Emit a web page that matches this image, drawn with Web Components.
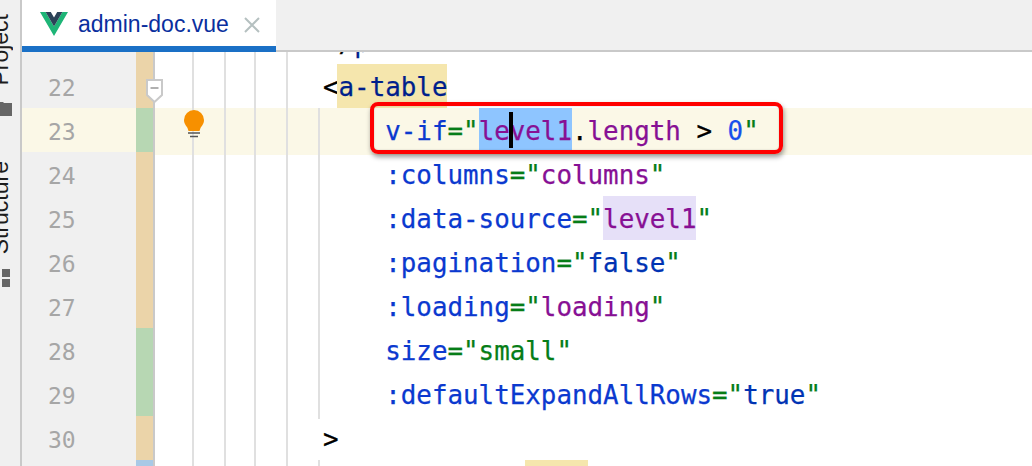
<!DOCTYPE html>
<html><head><meta charset="utf-8"><style>
html,body{margin:0;padding:0;background:#fff;overflow:hidden}
</style></head><body>
<ide-app>
  <tool-rail slot="rail">
    <rail-item label="Project" icon="folder"></rail-item>
    <rail-item label="Structure" icon="structure"></rail-item>
  </tool-rail>
  <editor-tabs slot="tabs"><file-tab>admin-doc.vue</file-tab></editor-tabs>
  <code-view slot="code">
    <code-row change="o" nog5><code-tok k="p">&lt;/</code-tok><code-tok k="tag">p</code-tok><code-tok k="p">&gt;</code-tok></code-row>
    <code-row n="22" change="o" nog5 fold><code-tok k="p">&lt;</code-tok><code-tok k="tag" hl="tagmatch">a-table</code-tok></code-row>
    <code-row n="23" change="g" current bulb>    <code-tok k="attr">v-if</code-tok><code-tok k="str">="</code-tok><code-tok k="var" hl="sel">le<text-caret></text-caret>vel1</code-tok><code-tok k="p">.</code-tok><code-tok k="var">length</code-tok><code-tok k="p"> &gt; </code-tok><code-tok k="num">0</code-tok><code-tok k="str">"</code-tok><red-mark></red-mark></code-row>
    <code-row n="24" change="o">    <code-tok k="attr">:columns</code-tok><code-tok k="str">="</code-tok><code-tok k="var">columns</code-tok><code-tok k="str">"</code-tok></code-row>
    <code-row n="25" change="o">    <code-tok k="attr">:data-source</code-tok><code-tok k="str">="</code-tok><code-tok k="var" hl="read">level1</code-tok><code-tok k="str">"</code-tok></code-row>
    <code-row n="26" change="o">    <code-tok k="attr">:pagination</code-tok><code-tok k="str">="</code-tok><code-tok k="kw">false</code-tok><code-tok k="str">"</code-tok></code-row>
    <code-row n="27" change="o">    <code-tok k="attr">:loading</code-tok><code-tok k="str">="</code-tok><code-tok k="var">loading</code-tok><code-tok k="str">"</code-tok></code-row>
    <code-row n="28" change="g">    <code-tok k="attr">size</code-tok><code-tok k="str">="small"</code-tok></code-row>
    <code-row n="29" change="g">    <code-tok k="attr">:defaultExpandAllRows</code-tok><code-tok k="str">="</code-tok><code-tok k="kw">true</code-tok><code-tok k="str">"</code-tok></code-row>
    <code-row n="30" change="o" nog5><code-tok k="p">&gt;</code-tok></code-row>
    <code-row change="b">             <code-tok k="p" hl="match">    </code-tok></code-row>
  </code-view>
</ide-app>
<script>
function def(name,css,html,init){
  customElements.define(name,class extends HTMLElement{
    constructor(){super();const r=this.attachShadow({mode:'open'});r.innerHTML='<style>'+css+'</style>'+html;}
    connectedCallback(){if(init)init(this,this.shadowRoot);}
  });
}
const MONO='"DejaVu Sans Mono","Liberation Mono",monospace';
def('ide-app',`:host{display:grid;grid-template-columns:22px 1fr;grid-template-rows:52px 1fr;width:1032px;height:466px;overflow:hidden;background:#fff}
.rail{grid-row:1/3;display:block;min-height:0}.tabs{position:relative;z-index:2}.code{min-height:0;overflow:hidden}`,
`<div class="rail"><slot name="rail"></slot></div><div class="tabs"><slot name="tabs"></slot></div><div class="code"><slot name="code"></slot></div>`);
def('tool-rail',`:host{display:flex;flex-direction:column;box-sizing:border-box;width:22px;height:466px;background:#f0f0f0;border-right:2px solid #c9c9c9;overflow:hidden;padding-top:14px;gap:45px}`,`<slot></slot>`);
const ICONS={
 folder:`<svg width="12" height="15" viewBox="0 0 12 15"><path d="M0 1h3l1 1h8v13H0z" fill="#666"/></svg>`,
 structure:`<svg width="12" height="18" viewBox="0 0 12 18"><path d="M2 0h8v8H2zM2 10h8v8H2z" fill="#666"/></svg>`
};
def('rail-item',`:host{display:flex;flex-direction:column;align-items:flex-start;gap:15px;width:20px}
.t{writing-mode:vertical-rl;transform:rotate(180deg);font:23px/25px "Liberation Sans",Arial,sans-serif;color:#1c1c1c;margin-left:-12px;white-space:nowrap}
svg{display:block}`,`<div class="t"></div><div class="i"></div>`,(el,r)=>{
 r.querySelector('.t').textContent=el.getAttribute('label');
 r.querySelector('.i').innerHTML=ICONS[el.getAttribute('icon')];
});
def('editor-tabs',`:host{display:flex;height:52px;box-sizing:border-box;background:#f0f0f0;border-bottom:2px solid #c9c9c9}`,`<slot></slot>`);
def('file-tab',`:host{display:flex;align-items:center;box-sizing:border-box;width:254px;height:52px;background:#fff;border-bottom:6px solid #1a70c6;padding-left:18px;gap:10px;font:23px "Liberation Sans",Arial,sans-serif;color:#0a2f9e}
.n{white-space:nowrap;width:156px;margin-top:2px}svg{display:block;flex:none;margin-top:1px}svg.x{margin-top:4px}`,
`<svg width="28" height="24" viewBox="0 0 28 24"><path d="M0 0h5.6L14 14.4 22.4 0H28L14 24z" fill="#1eb577"/><path d="M5.6 0h5.2L14 5.4 17.2 0h5.2L14 14.4z" fill="#2c4358"/></svg><span class="n"><slot></slot></span><svg class="x" width="16" height="16" viewBox="0 0 16 16"><path d="M1 1l14 14M15 1L1 15" stroke="#b5c0c0" stroke-width="2" fill="none"/></svg>`);
def('code-view',`:host{display:block;margin-top:-32px}`,`<slot></slot>`);
def('code-row',`:host{display:grid;grid-template-columns:114px 17px 2px 1fr;height:44px;--bg:transparent;--gut:#f0f0f0;--g5:#e0e0e0;position:relative}
:host([current]){--bg:#fbf8e7;--gut:#fbf8e7}
:host([nog5]){--g5:transparent}
.num{background:var(--gut);color:#a6a6a6;font:23px/48px ${MONO};padding-left:26px;box-sizing:border-box;height:44px;overflow:hidden}
.chg{background:#ebd4a9}
:host([change=g]) .chg{background:#b7d7b3}
:host([change=b]) .chg{background:#a9c9e6}
.sep{background:#c9c9c9}
.code{position:relative;padding-left:168px;background:
 linear-gradient(#e0e0e0,#e0e0e0) 37px 0/2px 100% no-repeat,
 linear-gradient(#e0e0e0,#e0e0e0) 69px 0/2px 100% no-repeat,
 linear-gradient(#e0e0e0,#e0e0e0) 99px 0/2px 100% no-repeat,
 linear-gradient(#e0e0e0,#e0e0e0) 131px 0/2px 100% no-repeat,
 linear-gradient(var(--g5),var(--g5)) 163px 0/2px 100% no-repeat,
 var(--bg);
 font:25.85px/47px ${MONO};white-space:pre;color:#000;-webkit-text-stroke:.25px}
.fold{position:absolute;left:124px;top:15px;z-index:1}
.bulb{position:absolute;left:162px;top:2px;z-index:1}
svg{display:block}`,
`<div class="num"></div><div class="chg"></div><div class="sep"></div><div class="code"><slot></slot></div>`,
(el,r)=>{
 r.querySelector('.num').textContent=el.getAttribute('n')||'';
 if(el.hasAttribute('fold')){const d=document.createElement('div');d.className='fold';d.innerHTML=`<svg width="17" height="24" viewBox="0 0 17 24"><path d="M1 1h15v15l-7.500 7L1 16z" fill="#fff" stroke="#c9c9c9" stroke-width="2"/><path d="M4.500 9h8" stroke="#b0b0b0" stroke-width="2"/></svg>`;r.appendChild(d);}
 if(el.hasAttribute('bulb')){const d=document.createElement('div');d.className='bulb';d.innerHTML=`<svg width="20" height="28" viewBox="0 0 20 28"><path d="M10 0a10 10 0 0 1 10 10c0 4-2.500 6-3.500 8-.5 1-.5 2-1 3H4.500c-.5-1-.5-2-1-3C2.500 16 0 14 0 10A10 10 0 0 1 10 0z" fill="#f79000"/><path d="M4 23h12" stroke="#555" stroke-width="1.500"/><path d="M6 26.500h8" stroke="#555" stroke-width="1.500"/></svg>`;r.appendChild(d);}
});
def('code-tok',`:host{display:inline-block;height:44px;vertical-align:top}
:host([k=p]){color:#000}
:host([k=tag]){color:#001f8c}
:host([k=attr]){color:#0b39cf}
:host([k=str]){color:#067d17}
:host([k=var]){color:#871094}
:host([k=num]){color:#1750eb}
:host([k=kw]){color:#0033b3}
:host([hl=sel]){background:#8ec5ff}
:host([hl=match]){background:#f5e6ad}
:host([hl=tagmatch]){background:#f5e6ad;margin-left:-2px;padding-left:2px}
:host([hl=read]){background:#e6e0f8}`,`<slot></slot>`);
def('text-caret',`:host{display:inline-block;position:relative;width:0;height:44px;vertical-align:top}
i{position:absolute;left:-1px;top:4px;width:4px;height:36px;background:#000}`,`<i></i>`);
def('red-mark',`:host{position:absolute;left:215px;top:-6px;width:413px;height:52px;box-sizing:border-box;border:4px solid #f00;border-radius:8px;box-shadow:1px 3px 5px rgba(0,0,0,.4),inset 0 0 2px rgba(0,0,0,.2);pointer-events:none}`,``);
</script>
</body></html>
